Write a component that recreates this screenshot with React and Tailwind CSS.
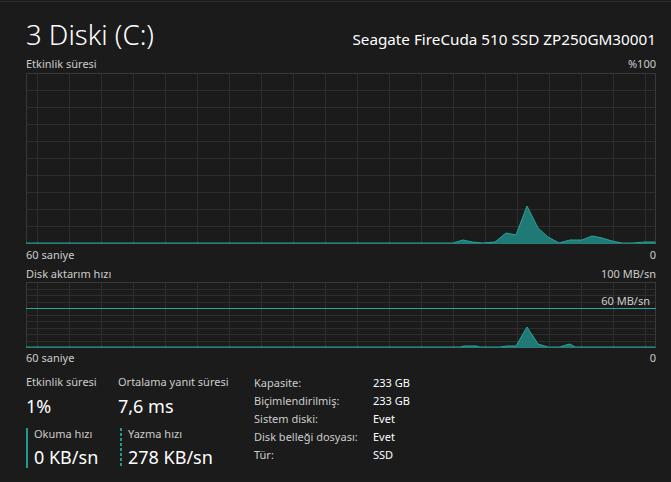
import React from "react";

const GRID = "#2e2e2e";
const BORDER = "#383838";
const TEAL = "#26a69d";
const FILL = "#1f7a75";

function Chart({ height, hLines, points, level }) {
  const w = 630;
  const base = height - 1;
  const vx = [];
  for (let i = 0; i < 20; i++) vx.push(11 + 32 * i);
  const pts = points.map(([x, y]) => `${x},${y}`).join(" ");
  const area = `M0,${base} L${pts.split(" ").join(" L")} L629,${base} Z`;
  return (
    <svg width={w} height={height} className="block">
      <g shapeRendering="crispEdges">
        {vx.map((x) => (
          <rect key={"v" + x} x={x} y={0} width={1} height={height} fill={GRID} />
        ))}
        {hLines.map((y) => (
          <rect key={"h" + y} x={0} y={y} width={w} height={1} fill={GRID} />
        ))}
        <rect x={0} y={0} width={w} height={1} fill={BORDER} />
        <rect x={0} y={0} width={1} height={height} fill={BORDER} />
        <rect x={629} y={0} width={1} height={height} fill={BORDER} />
        {level !== undefined && (
          <rect x={0} y={level} width={w} height={1} fill={TEAL} />
        )}
      </g>
      <path d={area} fill={FILL} />
      <polyline points={`0,${base} ${pts} 629,${base}`} fill="none" stroke={TEAL} strokeWidth={1} strokeLinejoin="round" />
      <rect x={0} y={base} width={w} height={1} fill="#2a7c77" shapeRendering="crispEdges" />
    </svg>
  );
}

const pts1 = [
  [0, 170], [427, 170], [437, 167], [446, 169], [457, 170], [469, 169], [480, 160], [490, 162],
  [501, 133], [512, 155], [522, 164], [533, 170], [544, 167], [556, 167], [566, 163], [576, 165],
  [586, 168], [596, 170], [607, 170], [619, 169], [629, 169],
];

const pts2 = [
  [0, 65], [434, 65], [438, 64], [450, 64], [454, 65], [474, 65], [481, 64], [490, 64],
  [501, 45], [512, 62], [522, 65], [534, 65], [540, 63], [544, 62], [549, 65], [629, 65],
];

export default function App() {
  return (
    <div className="w-[671px] h-[482px] overflow-hidden bg-[#1b1b1b] text-[#cccccc] font-['Noto_Sans',sans-serif]">
      <div className="mt-px h-px bg-[#2d2d2d]" />
      <div className="pl-[26px] pr-[15px]">
        <div className="mt-[15px] flex items-baseline justify-between">
          <div className="text-[27.5px] leading-[36px] font-light text-white">3 Diski (C:)</div>
          <div className="text-[15.25px] leading-[20px] text-white">Seagate FireCuda 510 SSD ZP250GM30001</div>
        </div>
        <div className="mt-[3px] flex justify-between text-[11px] leading-[16px]">
          <span>Etkinlik süresi</span>
          <span>%100</span>
        </div>
        <div className="mt-px">
          <Chart
            height={171}
            hLines={[17, 34, 51, 68, 85, 102, 119, 136, 153]}
            points={pts1}
          />
        </div>
        <div className="mt-[3px] flex justify-between text-[11px] leading-[16px]">
          <span>60 saniye</span>
          <span>0</span>
        </div>
        <div className="mt-[3px] flex justify-between text-[11px] leading-[16px]">
          <span>Disk aktarım hızı</span>
          <span>100 MB/sn</span>
        </div>
        <div className="relative">
          <Chart height={66} hLines={[7, 13, 20, 33, 39, 46, 52, 59]} points={pts2} level={26} />
          <span className="absolute right-[6px] top-[11px] text-[11px] leading-[16px]">60 MB/sn</span>
        </div>
        <div className="mt-[2px] flex justify-between text-[11px] leading-[16px]">
          <span>60 saniye</span>
          <span>0</span>
        </div>
        <div className="mt-[8px] flex">
          <div className="w-[228px]">
            <div className="flex text-[11px] leading-[16px]">
              <span className="w-[92px]">Etkinlik süresi</span>
              <span>Ortalama yanıt süresi</span>
            </div>
            <div className="mt-[4px] flex text-[18px] leading-[24px] text-white">
              <span className="w-[92px]">1%</span>
              <span>7,6 ms</span>
            </div>
            <div className="mt-[10px] flex h-[40px]">
              <div className="flex w-[94px]">
                <div className="w-[2px] h-[40px] bg-[#1e9c94]" />
                <div className="pl-[6px]">
                  <div className="text-[11px] leading-[12px]">Okuma hızı</div>
                  <div className="mt-[5px] text-[18px] leading-[24px] text-white whitespace-nowrap">0 KB/sn</div>
                </div>
              </div>
              <div className="flex">
                <div className="w-[2px] h-[40px] bg-[repeating-linear-gradient(to_bottom,#1e9c94_0px,#1e9c94_3px,transparent_3px,transparent_5px)]" />
                <div className="pl-[6px]">
                  <div className="text-[11px] leading-[12px]">Yazma hızı</div>
                  <div className="mt-[5px] text-[18px] leading-[24px] text-white whitespace-nowrap">278 KB/sn</div>
                </div>
              </div>
            </div>
          </div>
          <div className="mt-0 text-[11px] leading-[18px]">
            {[
              ["Kapasite:", "233 GB"],
              ["Biçimlendirilmiş:", "233 GB"],
              ["Sistem diski:", "Evet"],
              ["Disk belleği dosyası:", "Evet"],
              ["Tür:", "SSD"],
            ].map(([k, v]) => (
              <div key={k} className="flex">
                <span className="w-[119px]">{k}</span>
                <span className="text-white">{v}</span>
              </div>
            ))}
          </div>
        </div>
      </div>
    </div>
  );
}
